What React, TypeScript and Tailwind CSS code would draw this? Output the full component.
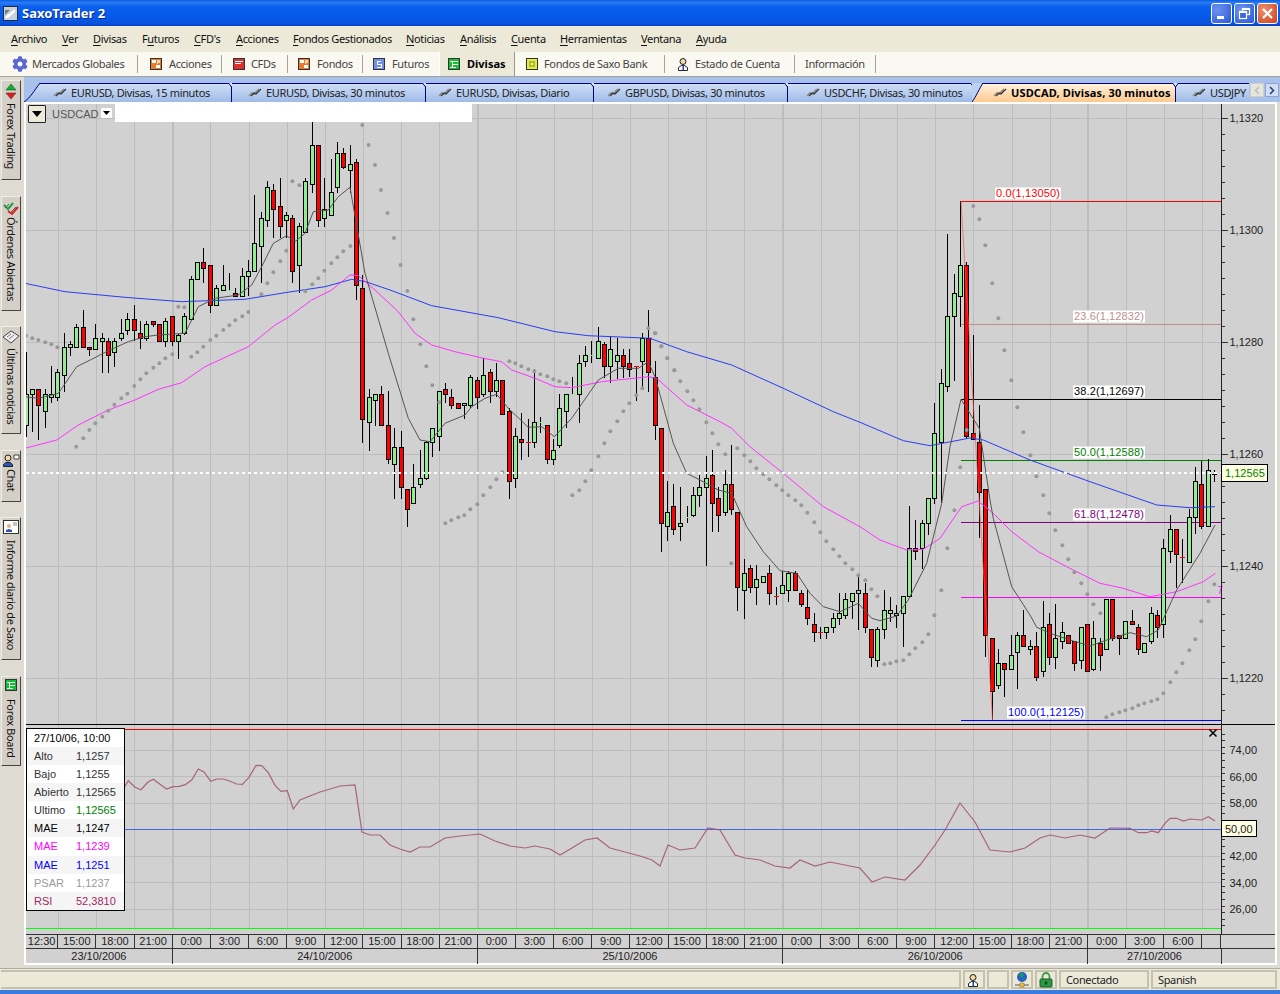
import type { ReactNode } from "react";
import { FaCog } from "react-icons/fa";

type Row = number[];
// readings are [x, high, bodyTop, bodyBottom, low, kind], 1 green, 0 red, 2/3 doji green/red, 4 doji black
const seg = (x0: number, y0: number, rows: Row[]) =>
  rows.map((r) => ({ x: x0 + r[0] / 3, hi: y0 + r[1] / 3, top: y0 + r[2] / 3, bot: y0 + r[3] / 3, lo: y0 + r[4] / 3, kind: r[5] }));

const bars = [
  ...seg(25, 110, [
    [4, 726, 853, 946, 980, 1], [22, 838, 838, 853, 965, 1], [40, 838, 838, 886, 990, 0], [61, 838, 853, 905, 955, 1], [79, 769, 853, 862, 880, 1],
    [97, 778, 787, 862, 872, 1], [118, 670, 712, 796, 845, 1], [136, 694, 703, 712, 738, 1], [154, 643, 652, 712, 712, 1], [175, 601, 652, 712, 712, 0],
    [193, 712, 712, 718, 738, 0], [211, 643, 685, 718, 718, 1], [232, 670, 685, 694, 788, 1], [250, 685, 694, 736, 788, 0], [268, 685, 694, 727, 770, 1],
    [289, 628, 670, 685, 694, 1], [307, 610, 628, 661, 675, 1], [328, 586, 628, 661, 694, 0], [346, 634, 670, 685, 718, 0], [364, 634, 643, 685, 694, 1],
    [385, 634, 634, 643, 652, 0], [403, 643, 643, 694, 694, 0], [421, 625, 634, 694, 712, 1], [442, 619, 619, 694, 708, 0], [460, 672, 676, 694, 746, 1],
    [478, 610, 619, 670, 676, 1], [499, 499, 508, 628, 628, 1], [517, 457, 457, 508, 508, 1], [535, 414, 457, 475, 520, 0], [556, 466, 466, 586, 610, 0],
    [574, 526, 535, 586, 586, 1], [595, 466, 526, 541, 541, 1], [613, 490, 541, 541, 541, 2], [631, 535, 550, 559, 559, 0], [652, 475, 499, 559, 559, 1],
    [670, 450, 484, 499, 559, 1], [688, 256, 400, 484, 484, 1], [709, 307, 325, 409, 518, 1], [727, 214, 232, 331, 350, 1], [745, 223, 241, 298, 383, 0],
    [766, 205, 289, 349, 383, 0], [784, 307, 316, 331, 383, 1], [802, 316, 325, 484, 518, 0], [823, 340, 349, 466, 550, 1], [841, 205, 214, 367, 367, 1],
    [862, 37, 106, 223, 248, 1], [880, 106, 106, 331, 350, 0], [898, 205, 298, 325, 350, 1], [919, 148, 247, 316, 316, 1], [937, 97, 130, 232, 250, 1],
    [955, 115, 130, 172, 178, 0], [976, 106, 163, 181, 250, 1], [994, 148, 157, 526, 570, 0],
  ]),
  ...seg(355, 290, [
    [22, -45, -5, 388, 458, 0],
    [43, 297, 322, 397, 482, 1], [61, 313, 313, 331, 408, 1], [79, 289, 313, 406, 408, 0], [100, 303, 406, 508, 523, 0], [118, 415, 472, 523, 627, 1],
    [139, 424, 472, 593, 627, 0], [157, 598, 598, 658, 710, 0], [175, 522, 592, 640, 640, 1], [196, 480, 565, 583, 593, 1], [214, 452, 457, 565, 570, 1],
    [232, 415, 415, 457, 500, 1], [253, 304, 304, 439, 482, 1], [271, 280, 298, 313, 340, 0], [289, 298, 322, 346, 356, 0], [310, 340, 340, 355, 355, 0],
    [328, 340, 340, 346, 388, 1], [346, 256, 262, 346, 355, 1], [367, 262, 271, 322, 356, 0], [385, 205, 256, 313, 322, 1], [406, 238, 247, 304, 340, 0],
    [424, 220, 271, 304, 322, 1], [442, 271, 271, 373, 373, 0], [463, 355, 364, 574, 627, 0], [481, 415, 439, 565, 593, 1], [499, 370, 448, 457, 510, 0],
    [520, 388, 457, 457, 500, 3], [538, 238, 397, 457, 474, 1], [556, 381, 397, 397, 430, 2], [577, 406, 406, 508, 523, 0], [595, 447, 481, 508, 525, 1],
    [613, 313, 355, 466, 474, 1], [634, 313, 313, 364, 415, 1], [652, 262, 313, 313, 313, 2], [673, 194, 220, 313, 398, 1], [691, 169, 196, 214, 230, 1],
    [709, 153, 196, 196, 220, 2], [730, 112, 154, 205, 205, 1], [748, 155, 163, 229, 265, 0], [766, 137, 178, 229, 280, 1], [787, 145, 196, 214, 268, 1],
    [805, 178, 196, 229, 265, 0], [823, 178, 220, 238, 262, 0], [844, 229, 229, 229, 332, 3], [862, 128, 145, 214, 300, 1], [880, 60, 145, 247, 305, 0],
    [901, 214, 262, 406, 450, 0], [919, 415, 415, 700, 785, 0], [937, 573, 667, 709, 753, 1], [955, 582, 649, 718, 735, 0],
  ]),
  ...seg(650, 230, [
    [91, 771, 880, 889, 933, 1], [112, 829, 862, 862, 880, 2], [130, 772, 796, 856, 862, 1], [148, 736, 772, 796, 830, 1], [169, 679, 745, 772, 1007, 1],
    [187, 660, 736, 820, 905, 0], [205, 772, 805, 856, 905, 0], [226, 720, 763, 847, 858, 1], [244, 646, 763, 838, 856, 0], [262, 847, 847, 1072, 1142, 0],
    [283, 988, 1030, 1081, 1166, 1], [301, 1005, 1015, 1072, 1090, 0], [319, 1005, 1048, 1072, 1124, 1], [340, 1039, 1039, 1057, 1057, 1], [358, 1005, 1030, 1090, 1124, 0],
    [379, 1072, 1099, 1099, 1124, 3], [397, 1024, 1066, 1090, 1090, 1], [415, 1022, 1030, 1081, 1115, 1], [436, 1024, 1030, 1081, 1081, 0], [454, 1080, 1090, 1123, 1132, 0],
    [472, 1080, 1132, 1165, 1184, 0], [493, 1150, 1183, 1207, 1235, 0], [511, 1190, 1207, 1207, 1226, 3], [529, 1192, 1192, 1207, 1226, 1], [550, 1150, 1165, 1192, 1208, 1],
    [568, 1090, 1150, 1165, 1185, 1], [586, 1090, 1108, 1156, 1166, 1], [607, 1090, 1090, 1114, 1166, 1], [625, 1042, 1081, 1090, 1199, 1], [646, 1060, 1090, 1192, 1208, 0],
    [664, 1198, 1198, 1282, 1310, 0], [682, 1190, 1198, 1291, 1310, 1], [703, 1080, 1141, 1198, 1226, 1], [721, 1100, 1141, 1150, 1175, 1], [739, 1124, 1150, 1157, 1194, 1],
    [760, 1099, 1099, 1150, 1250, 1], [778, 828, 955, 1099, 1099, 1], [796, 870, 955, 964, 990, 0], [817, 870, 880, 955, 1016, 1], [835, 805, 805, 880, 915, 1],
    [853, 519, 610, 805, 822, 1], [874, 417, 460, 637, 820, 1], [892, 13, 259, 469, 486, 1], [913, 133, 190, 259, 452, 1],
  ]),
  ...seg(950, 180, [
    [31, 63, 256, 349, 442, 1], [49, 247, 256, 769, 777, 0], [70, 465, 760, 778, 778, 0],
  ]),
  ...seg(950, 440, [
    [88, -105, 7, 157, 295, 0], [106, 148, 148, 586, 652, 0], [127, 595, 595, 754, 840, 0], [145, 628, 670, 736, 746, 1], [163, 670, 670, 688, 772, 0],
    [184, 586, 646, 688, 688, 1], [202, 576, 586, 637, 746, 1], [220, 510, 586, 619, 619, 0], [241, 600, 619, 628, 646, 1], [259, 575, 619, 712, 722, 0],
    [280, 484, 562, 694, 712, 1], [298, 520, 553, 652, 676, 0], [316, 492, 595, 652, 688, 1], [337, 545, 577, 604, 628, 1], [355, 586, 586, 611, 611, 0],
    [373, 604, 604, 670, 694, 0], [394, 562, 562, 661, 688, 1], [412, 553, 553, 694, 694, 0], [430, 544, 595, 688, 694, 1], [451, 595, 610, 646, 694, 0],
    [469, 478, 478, 628, 628, 1], [487, 478, 478, 595, 604, 0], [508, 586, 586, 595, 646, 0], [526, 544, 544, 595, 595, 1], [547, 510, 544, 553, 553, 0],
    [565, 553, 562, 628, 646, 0], [583, 610, 610, 637, 637, 1], [604, 502, 520, 604, 612, 1], [622, 510, 526, 562, 595, 0], [640, 298, 325, 553, 595, 1],
    [661, 226, 268, 334, 370, 1], [679, 268, 268, 343, 445, 0], [697, 298, 352, 352, 428, 3], [718, 208, 232, 367, 367, 1], [736, 80, 124, 232, 283, 1],
    [754, 62, 133, 259, 268, 0], [775, 58, 91, 259, 262, 1], [793, 90, 102, 102, 125, 4],
  ]),
];

const pts = (x0: number, y0: number, list: number[][]) => list.map((p) => [x0 + p[0] / 3, y0 + p[1] / 3]);
const toLine = (list: number[][]) => list.map((p) => p[0].toFixed(1) + "," + p[1].toFixed(1)).join(" ");

const smaFast = toLine([
  ...pts(25, 110, [[0, 860], [40, 865], [100, 850], [155, 770], [200, 748], [250, 722], [310, 695], [360, 680], [400, 675], [480, 670], [520, 590], [570, 565], [640, 555], [680, 525], [710, 470], [745, 400], [785, 377], [810, 395], [840, 370], [865, 305], [910, 300], [940, 260], [975, 232]]),
  ...pts(355, 290, [[30, -50], [100, 190], [160, 385], [195, 450], [225, 455], [270, 400], [330, 375], [350, 350], [390, 325], [425, 313], [460, 355], [520, 412], [560, 410], [598, 440], [650, 385], [730, 270], [790, 235], [850, 235], [880, 215], [900, 260]]),
  ...pts(650, 230, [[40, 530], [70, 640], [110, 730], [150, 750], [205, 780], [245, 790], [290, 890], [340, 965], [390, 1022], [440, 1030], [480, 1090], [520, 1130], [570, 1145], [625, 1120], [665, 1165], [690, 1172], [740, 1158], [775, 1110], [830, 1000], [875, 820], [900, 650], [933, 508]]),
  ...pts(950, 180, [[88, 745], [120, 960]]),
  ...pts(950, 440, [[130, 235], [185, 440], [240, 525], [260, 562], [300, 580], [370, 603], [420, 618], [470, 600], [540, 578], [590, 590], [625, 570], [680, 450], [750, 340], [795, 255]]),
]);

const smaMid = toLine([
  ...pts(25, 110, [[0, 1015], [95, 990], [160, 945], [250, 900], [330, 870], [400, 838], [470, 818], [540, 770], [670, 710], [750, 645], [790, 622], [860, 570], [920, 540], [975, 495], [1000, 497]]),
  ...pts(355, 290, [[60, 0], [130, 65], [180, 130], [230, 165], [300, 185], [385, 205], [440, 215], [470, 240], [540, 265], [600, 290], [650, 293], [740, 275], [880, 260]]),
  ...pts(650, 230, [[20, 445], [110, 525], [210, 575], [245, 595], [300, 650], [400, 730], [520, 830], [630, 890], [690, 930], [770, 960], [820, 958], [870, 925], [935, 830]]),
  ...pts(950, 440, [[35, 200], [85, 183], [130, 220], [185, 275], [265, 335], [350, 380], [450, 430], [520, 445], [600, 470], [680, 455], [760, 425], [796, 400]]),
]);

const smaSlow = toLine([
  ...pts(25, 110, [[0, 520], [120, 545], [300, 562], [470, 575], [660, 568], [780, 548], [900, 530], [980, 508], [1022, 515]]),
  ...pts(355, 290, [[105, 0], [230, 47], [430, 83], [600, 125], [700, 137], [890, 145]]),
  ...pts(650, 230, [[0, 325], [110, 365], [245, 405], [400, 475], [550, 545], [630, 577], [760, 632], [840, 647], [960, 624]]),
  ...pts(950, 440, [[100, 0], [240, 60], [420, 125], [620, 195], [720, 203], [795, 200]]),
]);

const dots = [
  ...pts(25, 110, [[3, 677], [22, 685], [40, 690], [61, 697], [79, 703], [97, 712], [154, 1010], [175, 985], [193, 960], [211, 940], [232, 920], [250, 902], [268, 884], [289, 865], [307, 851], [328, 828], [346, 808], [364, 790], [385, 773], [403, 760], [421, 745], [442, 733], [460, 590], [478, 592], [499, 740], [517, 727], [535, 710], [556, 690], [574, 677], [595, 660], [613, 646], [631, 631], [652, 619], [670, 606], [709, 553], [727, 520], [745, 487], [766, 454], [784, 422], [802, 214], [823, 226], [841, 544], [862, 523], [880, 505], [898, 482], [919, 460], [937, 442], [955, 424], [976, 408], [1012, 45]]),
  [368.6, 145], [375, 165], [381, 190], [387.5, 213], [394, 238], [400.5, 265],
  ...pts(355, 290, [[157, 3], [175, 88], [196, 163], [214, 229], [232, 286], [253, 337], [271, 700], [289, 691], [310, 682], [328, 676], [346, 658], [367, 643], [385, 616], [406, 592], [424, 568], [442, 547], [463, 214], [481, 220], [499, 229], [520, 238], [538, 244], [556, 253], [577, 259], [595, 268], [613, 274], [634, 280], [652, 616], [673, 601], [691, 574], [709, 541], [730, 499], [748, 460], [766, 424], [787, 394], [805, 364], [823, 340], [844, 316], [862, 295], [880, 115], [901, 130], [919, 169], [937, 205], [958, 241]]),
  ...pts(650, 230, [[15, 310], [34, 349], [52, 385], [73, 421], [91, 454], [112, 484], [130, 511], [148, 538], [169, 577], [187, 610], [205, 643], [226, 673], [244, 1000], [262, 655], [283, 676], [301, 694], [319, 715], [340, 733], [358, 748], [379, 766], [397, 781], [415, 796], [436, 811], [454, 826], [472, 848], [493, 877], [511, 907], [529, 934], [550, 958], [568, 979], [586, 1000], [607, 1018], [625, 1036], [646, 1051], [664, 1078], [682, 1099], [703, 1303], [721, 1300], [739, 1294], [760, 1291], [778, 1273], [796, 1255], [817, 1237], [835, 1213], [853, 1156], [874, 1081], [892, 955], [913, 841], [931, 712], [950, 600]]),
  ...pts(950, 180, [[70, 78], [88, 118], [106, 196], [127, 310], [145, 415], [163, 511], [184, 601], [202, 682], [220, 757], [241, 826]]),
  ...pts(950, 440, [[259, 109], [280, 166], [298, 220], [316, 271], [337, 316], [355, 358], [373, 397], [394, 430], [412, 463], [430, 493], [451, 520], [469, 832], [487, 823], [508, 817], [526, 811], [547, 805], [565, 796], [583, 790], [604, 784], [622, 778], [640, 760], [661, 727], [679, 697], [697, 670], [718, 631], [736, 598], [754, 544], [775, 484], [793, 433]]),
];

const rsi = toLine([
  ...pts(0, 720, [[374, 200], [385, 182], [405, 202], [423, 209], [443, 187], [460, 178], [480, 193], [500, 207], [519, 200], [538, 199], [556, 194], [575, 180], [595, 147], [612, 156], [632, 184], [650, 177], [670, 177], [690, 184], [710, 192], [727, 193], [747, 172], [768, 136], [785, 137], [805, 158], [825, 196], [843, 214], [862, 212], [880, 267], [900, 240]]),
  [320, 792], [340, 786], [355, 785], [362, 832], [370, 835], [380, 835], [390, 845], [400, 849], [410, 852], [420, 847], [430, 847], [445, 838], [460, 836], [480, 834], [495, 841], [510, 846], [525, 848], [535, 846], [550, 849], [560, 855], [572, 848], [585, 840], [597, 838], [610, 848], [625, 852], [640, 856], [652, 860], [660, 866], [668, 845], [680, 850], [695, 848], [708, 828], [720, 830], [735, 855], [745, 858], [760, 860], [775, 866], [790, 868], [800, 860], [815, 866], [830, 862], [845, 865], [860, 868], [872, 882], [885, 877], [905, 880], [920, 865], [935, 845], [945, 830], [960, 803], [975, 822], [990, 850], [1010, 852], [1025, 848], [1040, 838], [1050, 835], [1065, 838], [1080, 835], [1095, 838], [1110, 828],
  ...pts(1130, 720, [[0, 325], [25, 338], [50, 338], [65, 333], [85, 338], [105, 310], [120, 295], [140, 295], [160, 303], [180, 297], [215, 300], [235, 290], [255, 303]]),
]);

const fibs = [
  { y: 201.5, c: "#ff0000", t: "0.0(1,13050)", lx: 995, lw: 66 },
  { y: 324.5, c: "#bc8f8f", t: "23.6(1,12832)", lx: 1073, lw: 72 },
  { y: 399.5, c: "#000000", t: "38.2(1,12697)", lx: 1073, lw: 72 },
  { y: 460.5, c: "#008000", t: "50.0(1,12588)", lx: 1073, lw: 72 },
  { y: 522.5, c: "#800080", t: "61.8(1,12478)", lx: 1073, lw: 72 },
  { y: 597.5, c: "#ff00ff", t: "", lx: 0, lw: 0 },
  { y: 720.5, c: "#0000ff", t: "100.0(1,12125)", lx: 1007, lw: 78 },
];

const priceLabels = [["1,1320", 118], ["1,1300", 230], ["1,1280", 342], ["1,1260", 454], ["1,1240", 566], ["1,1220", 678]] as const;
const rsiLabels = [["74,00", 750], ["66,00", 776.5], ["58,00", 803], ["42,00", 856], ["34,00", 882.5], ["26,00", 909]] as const;
const vLines = Array.from({ length: 31 }, (_, k) => 58.25 + 38.15 * k);
const minorPrice = Array.from({ length: 39 }, (_, k) => 102 + 16 * k);
const minorRsi = Array.from({ length: 30 }, (_, k) => 734 + 6.62 * k);

const Chart = () => (
  <svg viewBox="26 104 1249 830" className="block w-[1249px] h-[830px] shrink-0 tracking-normal">
    {/* grid */}
    <g stroke="#bdbdbd" shapeRendering="crispEdges">
      {vLines.map((x, k) => (
        <line key={k} x1={x} x2={x} y1={104} y2={928} strokeWidth={(k - 3) % 8 === 0 ? 2 : 1} />
      ))}
      {priceLabels.map(([, y]) => (
        <line key={y} x1={26} x2={1221} y1={y + 0.5} y2={y + 0.5} />
      ))}
      {[750, 776.5, 803, 856, 882.5, 909].map((y) => (
        <line key={y} x1={26} x2={1221} y1={y} y2={y} />
      ))}
    </g>

    {/* fibonacci levels */}
    {fibs.map((f) => (
      <line key={f.y} x1={961} x2={1221} y1={f.y} y2={f.y} stroke={f.c} shapeRendering="crispEdges" />
    ))}

    {/* candles */}
    <g shapeRendering="crispEdges">
      {bars.map((b, i) => {
        const rx = Math.round(b.x);
        const doji = b.kind >= 2;
        const stroke = b.kind === 2 ? "#90ee90" : b.kind === 3 ? "#ff0000" : "#000000";
        return (
          <g key={i}>
            <line x1={rx + 0.5} x2={rx + 0.5} y1={b.hi} y2={b.lo} stroke="#000" />
            {doji ? (
              <line x1={rx - 2} x2={rx + 3} y1={Math.round(b.top) + 0.5} y2={Math.round(b.top) + 0.5} stroke={stroke} />
            ) : (
              <rect x={rx - 1.5} y={Math.round(b.top) + 0.5} width={4} height={Math.max(1, Math.round(b.bot - b.top))} fill={b.kind === 1 ? "#90ee90" : "#ff0000"} stroke="#000" />
            )}
          </g>
        );
      })}
    </g>

    {/* indicators */}
    <line x1={961} y1={201} x2={992.5} y2={720} stroke="#ff5050" strokeOpacity={0.7} />
    <polyline points={smaSlow} fill="none" stroke="#2a3cf2" />
    <polyline points={smaMid} fill="none" stroke="#ff33ff" />
    <polyline points={smaFast} fill="none" stroke="#555555" />
    {dots.map((d, i) => (
      <circle key={i} cx={d[0]} cy={d[1]} r={2} fill="#999999" />
    ))}

    {/* last price */}
    <line x1={26} x2={1221} y1={473} y2={473} stroke="#ffffff" strokeWidth={2} strokeDasharray="3 3" />

    {/* level labels */}
    {fibs.filter((f) => f.t).map((f) => (
      <g key={f.t}>
        <rect x={f.lx} y={f.y - 14} width={f.lw} height={12} fill="#ffffff" />
        <text x={f.lx + 1} y={f.y - 5} fontSize={11} fill={f.c} textLength={f.lw - 2}>{f.t}</text>
      </g>
    ))}
    <text x={1217.5} y={594} fontSize={10} fill="#ff00ff">7</text>

    {/* panes divider */}
    <line x1={26} x2={1275} y1={724.5} y2={724.5} stroke="#000" shapeRendering="crispEdges" />
    <line x1={26} x2={1221} y1={729.5} y2={729.5} stroke="#ff0000" shapeRendering="crispEdges" />
    <line x1={26} x2={1221} y1={829.5} y2={829.5} stroke="#4169e1" shapeRendering="crispEdges" />
    <line x1={26} x2={1221} y1={928.5} y2={928.5} stroke="#00ff00" strokeWidth={1.5} shapeRendering="crispEdges" />
    <polyline points={rsi} fill="none" stroke="#a0506e" strokeOpacity={0.85} strokeWidth={1.2} />
    <path d="M1209.5 729.5l7 7m0-7l-7 7" stroke="#000" strokeWidth={1.5} fill="none" />

    {/* price axis */}
    <line x1={1221.5} x2={1221.5} y1={104} y2={934} stroke="#222" shapeRendering="crispEdges" />
    <g stroke="#333" shapeRendering="crispEdges">
      {minorPrice.map((y) => (
        <line key={y} x1={1222} x2={1225} y1={y + 0.5} y2={y + 0.5} />
      ))}
      {priceLabels.map(([, y]) => (
        <line key={y} x1={1222} x2={1228} y1={y + 0.5} y2={y + 0.5} />
      ))}
      {minorRsi.map((y) => (
        <line key={y} x1={1222} x2={1225} y1={y} y2={y} />
      ))}
    </g>
    <g fontSize={11} fill="#222">
      {priceLabels.map(([t, y]) => (
        <text key={t} x={1229.5} y={y + 4}>{t}</text>
      ))}
      {rsiLabels.map(([t, y]) => (
        <text key={t} x={1229.5} y={y + 4}>{t}</text>
      ))}
    </g>
    <rect x={1221.5} y={464.5} width={46} height={17} fill="#ffffe1" stroke="#000" shapeRendering="crispEdges" />
    <text x={1225} y={477} fontSize={11} fill="#008000">1,12565</text>
    <rect x={1221.5} y={820.5} width={35} height={16} fill="#ffffe1" stroke="#000" shapeRendering="crispEdges" />
    <text x={1225} y={833} fontSize={11} fill="#222">50,00</text>
  </svg>
);

const legendRows = [
  ["Alto", "1,1257", "text-[#333]", "bg-[#f5f5f5]"],
  ["Bajo", "1,1255", "text-[#333]", "bg-white"],
  ["Abierto", "1,12565", "text-[#333]", "bg-[#f5f5f5]"],
  ["Ultimo", "1,12565", "text-[#008000]", "bg-white"],
  ["MAE", "1,1247", "text-black", "bg-[#f5f5f5]"],
  ["MAE", "1,1239", "text-[#ff00ff]", "bg-white"],
  ["MAE", "1,1251", "text-[#0000ff]", "bg-[#f5f5f5]"],
  ["PSAR", "1,1237", "text-[#999999]", "bg-white"],
  ["RSI", "52,3810", "text-[#a0275f]", "bg-[#f5f5f5]"],
];

const Legend = () => (
  <div className="absolute left-0 top-[624px] w-[99px] border border-black bg-white text-[11px] leading-[18.1px] tracking-normal">
    <div className="pl-[7px] h-[18px] text-black">27/10/06, 10:00</div>
    {legendRows.map(([a, b, c, bg], i) => (
      <div key={i} className={`flex pl-[7px] h-[18.1px] ${bg}`}>
        <span className={`w-[42px] ${i < 4 ? "text-[#333]" : c}`}>{a}</span>
        <span className={c}>{b}</span>
      </div>
    ))}
  </div>
);

const times = ["12:30", "15:00", "18:00", "21:00", "0:00", "3:00", "6:00", "9:00", "12:00", "15:00", "18:00", "21:00", "0:00", "3:00", "6:00", "9:00", "12:00", "15:00", "18:00", "21:00", "0:00", "3:00", "6:00", "9:00", "12:00", "15:00", "18:00", "21:00", "0:00", "3:00", "6:00", ""];

const TimeAxis = () => (
  <div className="text-[11px] text-[#222] border-t border-[#333] shrink-0 tracking-normal">
    <div className="grid grid-cols-[32.25px_repeat(30,38.15px)_19px_1fr] h-[14px] leading-[12px] text-center border-b border-[#333]">
      {times.map((t, i) => (
        <div key={i} className="border-r border-[#333]">{t}</div>
      ))}
    </div>
    <div className="grid grid-cols-[146.7px_305.2px_305.2px_305.2px_133.4px_1fr] h-[15px] leading-[15px] text-center">
      {["23/10/2006", "24/10/2006", "25/10/2006", "26/10/2006", "27/10/2006"].map((d) => (
        <div key={d} className="border-r border-[#333]">{d}</div>
      ))}
    </div>
  </div>
);

const Box = ({ fill, children }: { fill: string; children?: ReactNode }) => (
  <svg width="12" height="12" viewBox="0 0 12 12" className="shrink-0" shapeRendering="crispEdges">
    <rect x=".5" y=".5" width="11" height="11" fill={fill} stroke="#333" />
    {children}
  </svg>
);

const StockIcon = () => (
  <Box fill="#e87a28">
    <path d="M2 2h4v3H2zM6 7h4v3H6z" fill="#fff" />
    <path d="M7 2h3v3H8v1H7z" fill="#fbd5a8" />
  </Box>
);

const GreenIcon = () => (
  <Box fill="#10c030">
    <path d="M2 3h8M4 6h6M2 9h6M4 3v6" stroke="#fff" fill="none" />
  </Box>
);

const Person = () => (
  <svg width="14" height="14" viewBox="0 0 14 14" className="shrink-0">
    <circle cx="6" cy="4.5" r="3" fill="#f3d7a5" stroke="#222" />
    <path d="M1.5 13.5v-3l3-2h3l3 2v3z" fill="#fff" stroke="#222" />
    <path d="M5.5 8.5h1.500v5h-1.500z" fill="#2040c0" />
  </svg>
);

const toolItems: { label: string; w: string; icon: ReactNode; on?: boolean }[] = [
  { label: "Mercados Globales", w: "w-[138px] pl-[12px] gap-[4px]", icon: <FaCog className="text-[#5a68cf] text-[16px] shrink-0" /> },
  { label: "Acciones", w: "w-[84px] pl-[12px] gap-[7px]", icon: <StockIcon /> },
  { label: "CFDs", w: "w-[66px] pl-[11px] gap-[6px]", icon: <Box fill="#dc3030"><path d="M2 3h8M2 5h6" stroke="#fff" fill="none" /></Box> },
  { label: "Fondos", w: "w-[75px] pl-[10px] gap-[7px]", icon: <StockIcon /> },
  { label: "Futuros", w: "w-[76px] pl-[10px] gap-[7px]", icon: <Box fill="#6f8fe8"><path d="M8 3H4v3h4v3H4" stroke="#fff" fill="none" /></Box> },
  { label: "Divisas", w: "w-[76px] pl-[8px] gap-[7px]", icon: <GreenIcon />, on: true },
  { label: "Fondos de Saxo Bank", w: "w-[150px] pl-[11px] gap-[6px]", icon: <Box fill="#e8e840"><path d="M3 3h6v6H3z" fill="#a8c020" /><path d="M5 5h2v2H5z" fill="#fff" /></Box> },
  { label: "Estado de Cuenta", w: "w-[130px] pl-[12px] gap-[4px]", icon: <Person /> },
  { label: "Información", w: "w-[81px] pl-[10px] gap-0", icon: null },
];

const menuItems = [
  { pre: "", u: "A", post: "rchivo", w: "w-[51px]" },
  { pre: "", u: "V", post: "er", w: "w-[31px]" },
  { pre: "", u: "D", post: "ivisas", w: "w-[49px]" },
  { pre: "F", u: "u", post: "turos", w: "w-[52px]" },
  { pre: "", u: "C", post: "FD's", w: "w-[42px]" },
  { pre: "", u: "A", post: "cciones", w: "w-[57px]" },
  { pre: "", u: "F", post: "ondos Gestionados", w: "w-[113px]" },
  { pre: "", u: "N", post: "oticias", w: "w-[54px]" },
  { pre: "", u: "A", post: "nálisis", w: "w-[51px]" },
  { pre: "", u: "C", post: "uenta", w: "w-[49px]" },
  { pre: "", u: "H", post: "erramientas", w: "w-[81px]" },
  { pre: "", u: "V", post: "entana", w: "w-[55px]" },
  { pre: "", u: "A", post: "yuda", w: "w-[40px]" },
];

const TabGlyph = () => (
  <svg width="14" height="10" viewBox="0 0 14 10" className="shrink-0" fill="none">
    <path d="M1 9l3-3 2 1 5-5" stroke="#8a8a80" strokeWidth="1.6" />
    <path d="M3 9l3-3 2 1 5-5" stroke="#333" strokeWidth="1.2" />
  </svg>
);

const Notch = () => (
  <svg width="7" height="5" viewBox="0 0 7 5" className="absolute -right-[4px] -top-[1px]">
    <path d="M.5 0l3 4 3-4" fill="#dbe6f8" stroke="#000080" />
  </svg>
);

const tabs = [
  { t: "EURUSD, Divisas, 15 minutos", w: "w-[207px] pl-[28px]", first: true },
  { t: "EURUSD, Divisas, 30 minutos", w: "w-[194px] pl-[16px]" },
  { t: "EURUSD, Divisas, Diario", w: "w-[168px] pl-[12px]" },
  { t: "GBPUSD, Divisas, 30 minutos", w: "w-[194px] pl-[13px]" },
  { t: "USDCHF, Divisas, 30 minutos", w: "w-[185px] pl-[18px] border-r-0" },
];

const TopTabs = () => (
  <div className="flex h-[25px] bg-[#a7c1ea] shrink-0 overflow-hidden">
    <div className="flex flex-1 pt-[6px] pl-[1px] overflow-hidden text-[11px] text-[#222]">
      {tabs.map((tab) => (
        <div key={tab.t} className={`relative flex items-center gap-[4px] h-[19px] pb-[2px] shrink-0 border-t border-r border-[#000080] bg-linear-to-b from-[#cfdef6] to-[#a0bbe8] ${tab.w}`}>
          {tab.first && (
            <svg width="16" height="19" viewBox="0 0 16 19" className="absolute -left-[1px] -top-[1px]">
              <path d="M0 19C6 15 10 8 16 0H0z" fill="#a7c1ea" />
              <path d="M0 19C6 15 10 8 16 0" fill="none" stroke="#000080" />
            </svg>
          )}
          <Notch />
          <TabGlyph />
          <span className="whitespace-nowrap">{tab.t}</span>
        </div>
      ))}
      <div className="relative flex items-center gap-[4px] h-[19px] pb-[2px] w-[203px] shrink-0 pl-[20px] border-t border-r border-[#000080] bg-linear-to-b from-[#fff1dc] to-[#fdc98d] font-bold text-black">
        <svg width="11" height="19" viewBox="0 0 11 19" className="absolute -left-[1px] -top-[1px]">
          <path d="M0 19C4 14 7 6 11 0H0z" fill="#bcd0f0" />
          <path d="M0 19C4 14 7 6 11 0" fill="none" stroke="#000080" />
        </svg>
        <Notch />
        <TabGlyph />
        <span className="whitespace-nowrap tracking-[0.13px]">USDCAD, Divisas, 30 minutos</span>
      </div>
      <div className="flex flex-1 items-center gap-[4px] h-[19px] pb-[2px] pl-[16px] border-t border-[#000080] bg-linear-to-b from-[#cfdef6] to-[#a0bbe8]">
        <TabGlyph />
        <span className="whitespace-nowrap">USDJPY</span>
      </div>
    </div>
    <div className="flex w-[31px] shrink-0 gap-[1px] pt-[6px] pl-[1px] bg-[#a7c1ea]">
      <div className="flex items-center justify-center w-[14px] h-[14px] bg-[#e6e6dc] border border-[#cfcfc4] text-[#bdbdb0]">
        <svg width="6" height="9" viewBox="0 0 6 9"><path d="M5 1L1.500 4.500 5 8" fill="none" stroke="currentColor" strokeWidth="1.500" /></svg>
      </div>
      <div className="flex items-center justify-center w-[14px] h-[14px] bg-[#d4dcf0] border border-[#8fa5d8] text-[#223a80]">
        <svg width="6" height="9" viewBox="0 0 6 9"><path d="M1 1l3.500 3.500L1 8" fill="none" stroke="currentColor" strokeWidth="1.500" /></svg>
      </div>
    </div>
  </div>
);

const sideTabs: { t: string; h: string; icon: ReactNode }[] = [
  {
    t: "Forex Trading",
    h: "h-[100px] gap-[2px]",
    icon: (
      <svg width="16" height="18" viewBox="0 0 16 18" className="shrink-0">
        <path d="M3 7l5-6 5 6z" fill="#10b030" stroke="#0a5010" strokeWidth=".5" />
        <path d="M3 10l5 6 5-6z" fill="#e02020" stroke="#601010" strokeWidth=".5" />
      </svg>
    ),
  },
  {
    t: "Órdenes Abiertas",
    h: "h-[115px] gap-[1px]",
    icon: (
      <svg width="18" height="17" viewBox="0 0 18 17" className="shrink-0" fill="none" strokeWidth="2">
        <path d="M2 6l4 4 5-6" stroke="#20a040" />
        <path d="M6 12l4 3 6-7" stroke="#d02020" />
        <path d="M3 9l4-4M9 13l5-5" stroke="#555" strokeWidth="1" />
      </svg>
    ),
  },
  {
    t: "Últimas noticias",
    h: "h-[108px] gap-[4px]",
    icon: (
      <svg width="18" height="15" viewBox="0 0 18 15" className="shrink-0">
        <path d="M1 8l8-6 8 5-8 7z" fill="#eee" stroke="#444" />
        <path d="M5 8l4-3M7 10l5-4" stroke="#777" fill="none" />
      </svg>
    ),
  },
  {
    t: "Chat",
    h: "h-[52px] gap-[2px]",
    icon: (
      <svg width="18" height="14" viewBox="0 0 18 14" className="shrink-0">
        <circle cx="6" cy="5" r="3" fill="#f3d7a5" stroke="#222" />
        <path d="M1.500 13.500v-2l2.500-2h4l2.500 2v2z" fill="#2f55c0" stroke="#222" />
        <path d="M12 2h5v4h-5z" fill="#fff" stroke="#444" />
      </svg>
    ),
  },
  {
    t: "Informe diario de Saxo",
    h: "h-[143px] gap-[6px]",
    icon: (
      <svg width="16" height="14" viewBox="0 0 16 14" className="shrink-0">
        <rect x=".5" y=".5" width="15" height="13" fill="#fff" stroke="#333" />
        <circle cx="6" cy="6" r="2" fill="#e0b080" />
        <path d="M3 12v-2l3-1 3 1v2z" fill="#3050b0" />
        <path d="M10 3h4M10 5h4" stroke="#888" />
      </svg>
    ),
  },
  {
    t: "Forex Board",
    h: "h-[90px] gap-[8px]",
    icon: <GreenIcon />,
  },
];

const SideBar = () => (
  <div className="flex flex-col gap-[15.500px] w-[24px] shrink-0 bg-[#dedbd3] pt-[3px] pl-[1px] text-[11px] text-[#111]">
    {sideTabs.map((s) => (
      <div key={s.t} className={`flex flex-col items-center w-[20px] pt-[2px] bg-[#d4d0c8] border-t border-r border-b border-l border-t-[#efeee8] border-l-[#efeee8] border-r-[#444] border-b-[#444] ${s.h}`}>
        {s.icon}
        <span className="[writing-mode:vertical-rl] whitespace-nowrap leading-[18px]">{s.t}</span>
      </div>
    ))}
  </div>
);

const WindowButton = ({ bg, children }: { bg: string; children: ReactNode }) => (
  <div className={`flex items-center justify-center w-[21px] h-[21px] rounded-[3px] border border-white ${bg}`}>{children}</div>
);

const App = () => (
  <div className="flex flex-col w-[1280px] h-[994px] overflow-hidden bg-[#dedbd3] font-['Noto_Sans',sans-serif] text-[11px] leading-none tracking-[-0.35px]">
    {/* title bar */}
    <div className="flex items-center h-[26px] shrink-0 pl-[3px] pr-[2px] bg-[linear-gradient(180deg,#0a5ce6_0%,#2b7cf4_10%,#0b60ee_25%,#0558ea_70%,#0a52dc_90%,#003fc4_100%)]">
      <svg width="15" height="15" viewBox="0 0 15 15" className="shrink-0">
        <rect x=".5" y=".5" width="14" height="14" fill="#c8d0d8" stroke="#1b2b4b" />
        <path d="M2 11l10-8v3l-7 6H2z" fill="#fff" />
        <path d="M2 4h5L2 9z" fill="#6a7a90" />
      </svg>
      <span className="ml-[4px] text-white text-[13px] font-bold tracking-normal [text-shadow:1px_1px_0_#0a2a90]">SaxoTrader 2</span>
      <div className="flex gap-[2px] ml-auto">
        <WindowButton bg="bg-[radial-gradient(circle_at_30%_30%,#6d93ee,#2a57d8)]">
          <div className="w-[7px] h-[3px] bg-white mt-[9px] -ml-[3px]" />
        </WindowButton>
        <WindowButton bg="bg-[radial-gradient(circle_at_30%_30%,#6d93ee,#2a57d8)]">
          <svg width="13" height="13" viewBox="0 0 13 13" fill="none" stroke="#fff" strokeWidth="1.200">
            <rect x="4.500" y="1.500" width="7" height="6" />
            <rect x="1.500" y="4.500" width="7" height="7" fill="#3f69dc" />
            <path d="M4.500 2h7M1.500 5h7" strokeWidth="2" />
          </svg>
        </WindowButton>
        <WindowButton bg="bg-[radial-gradient(circle_at_30%_30%,#ee8f6d,#cf3f1c)]">
          <svg width="13" height="13" viewBox="0 0 13 13" fill="none" stroke="#fff" strokeWidth="2.200">
            <path d="M2 2l9 9M11 2l-9 9" />
          </svg>
        </WindowButton>
      </div>
    </div>

    {/* menu */}
    <div className="flex items-center h-[26px] pb-[2px] shrink-0 pl-[11px] bg-[#ece9d8] text-[#111] whitespace-nowrap">
      {menuItems.map((m) => (
        <span key={m.u + m.post} className={`shrink-0 ${m.w}`}>
          {m.pre}<span className="underline underline-offset-2">{m.u}</span>{m.post}
        </span>
      ))}
    </div>

    {/* toolbar */}
    <div className="flex items-center h-[25px] shrink-0 bg-[#f9f8f1] border-b border-[#a5a39a] text-[#444] whitespace-nowrap">
      {toolItems.map((it) => (
        <div
          key={it.label}
          className={`flex items-center h-[24px] pb-[1px] shrink-0 ${it.w} ${it.on ? "bg-[#ece9d8] border-l border-l-white border-r border-r-[#9a9888] font-bold text-black tracking-normal" : ""}`}
        >
          {it.icon}
          <span>{it.label}</span>
          {!it.on && it.label !== "Futuros" && <span className="ml-auto mr-0 h-[18px] border-r border-[#a5a39a]" />}
        </div>
      ))}
    </div>

    {/* workspace */}
    <div className="flex flex-1 min-h-0">
      <SideBar />
      <div className="flex flex-col flex-1 min-w-0">
        <TopTabs />
        <div className="flex flex-col w-[1253px] h-[863px] shrink-0 border-2 border-white bg-[#d1d1d1] font-['Liberation_Sans',sans-serif]">
          <div className="relative h-[830px] shrink-0">
            <Chart />
            <div className="absolute left-[2px] top-[1px] flex items-center justify-center w-[18px] h-[18px] bg-[#ece9d8] border border-[#222] rounded-[1px]">
              <svg width="10" height="6" viewBox="0 0 10 6"><path d="M0 0h10L5 6z" fill="#000" /></svg>
            </div>
            <span className="absolute left-[26px] top-[3px] h-[14px] leading-[14px] text-[#555] tracking-normal">USDCAD</span>
            <div className="absolute left-[75px] top-[4px] flex items-center justify-center w-[11px] h-[10px] bg-white">
              <svg width="7" height="4" viewBox="0 0 7 4"><path d="M0 0h7L3.500 4z" fill="#000" /></svg>
            </div>
            <div className="absolute left-[89px] top-0 w-[357px] h-[18px] bg-white" />
            <Legend />
          </div>
          <TimeAxis />
        </div>
        <div className="h-[2px] shrink-0" />
      </div>
    </div>

    {/* status bar */}
    <div className="flex gap-[2px] h-[22px] shrink-0 pl-[1px] pr-[3px] py-[1px] bg-[#ece9d8] border-t border-[#aeac9e] text-[#222]">
      <div className="w-[960px] border-2 border-[#c4c1ae] border-l-0" />
      <div className="flex items-center justify-center w-[22px] border-2 border-[#c4c1ae]">
        <Person />
      </div>
      <div className="w-[22px] border-2 border-[#c4c1ae]" />
      <div className="flex items-center justify-center w-[22px] border-2 border-[#c4c1ae]">
        <svg width="16" height="17" viewBox="0 0 16 17" className="shrink-0">
          <circle cx="8" cy="6" r="5" fill="#2060d0" />
          <path d="M5 3l3-1 2 2-3 3zM9 7l2 0-1 3z" fill="#20a040" />
          <path d="M1 14h14" stroke="#555" />
          <rect x="6" y="12" width="4" height="4" fill="#f0c040" stroke="#806010" strokeWidth=".5" />
        </svg>
      </div>
      <div className="flex items-center justify-center w-[22px] border-2 border-[#c4c1ae]">
        <svg width="14" height="16" viewBox="0 0 14 16" className="shrink-0">
          <path d="M3.500 7V4.500a3.500 3.500 0 017 0V7" fill="none" stroke="#3a9a4a" strokeWidth="1.800" />
          <rect x="1" y="7" width="12" height="8" rx="1" fill="#2c9a44" stroke="#165a26" />
          <path d="M7 9v4M5.500 11h3" stroke="#0a3014" />
        </svg>
      </div>
      <div className="flex items-center w-[90px] pl-[5px] border-2 border-[#c4c1ae]">Conectado</div>
      <div className="flex items-center flex-1 pl-[5px] border-2 border-[#c4c1ae]">Spanish</div>
    </div>
    <div className="h-[4px] shrink-0 bg-[#3a7be0]" />
  </div>
);

export default App;
